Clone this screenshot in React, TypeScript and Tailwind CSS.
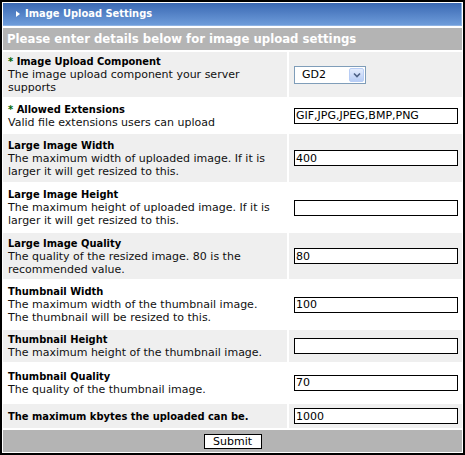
import React from 'react';

interface Setting {
  title: string;
  desc?: string;
  required?: boolean;
  value?: string;
  kind?: 'select' | 'text';
  height: string;
  shaded: boolean;
}

const settings: Setting[] = [
  {
    title: 'Image Upload Component',
    desc: 'The image upload component your server supports',
    required: true,
    kind: 'select',
    height: 'h-[46px]',
    shaded: true,
  },
  {
    title: 'Allowed Extensions',
    desc: 'Valid file extensions users can upload',
    required: true,
    value: 'GIF,JPG,JPEG,BMP,PNG',
    height: 'h-[34px]',
    shaded: false,
  },
  {
    title: 'Large Image Width',
    desc: 'The maximum width of uploaded image. If it is larger it will get resized to this.',
    value: '400',
    height: 'h-[49px]',
    shaded: true,
  },
  {
    title: 'Large Image Height',
    desc: 'The maximum height of uploaded image. If it is larger it will get resized to this.',
    value: '',
    height: 'h-[48px]',
    shaded: false,
  },
  {
    title: 'Large Image Quality',
    desc: 'The quality of the resized image. 80 is the recommended value.',
    value: '80',
    height: 'h-[47px]',
    shaded: true,
  },
  {
    title: 'Thumbnail Width',
    desc: 'The maximum width of the thumbnail image. The thumbnail will be resized to this.',
    value: '100',
    height: 'h-[48px]',
    shaded: false,
  },
  {
    title: 'Thumbnail Height',
    desc: 'The maximum height of the thumbnail image.',
    value: '',
    height: 'h-[32px]',
    shaded: true,
  },
  {
    title: 'Thumbnail Quality',
    desc: 'The quality of the thumbnail image.',
    value: '70',
    height: 'h-[39px]',
    shaded: false,
  },
  {
    title: 'The maximum kbytes the uploaded can be.',
    value: '1000',
    height: 'h-[25px]',
    shaded: true,
  },
];

const SelectBox: React.FC = () => (
  <div className="flex h-[18px] w-[72px] items-center border border-[#7f9db9] bg-white">
    <span className="flex-1 pl-[7px] text-[11px] leading-none text-black">GD2</span>
    <span className="mr-px flex h-[14px] w-[15px] items-center justify-center rounded-[2px] border border-[#b8cdf5] bg-gradient-to-b from-[#e3ecfd] to-[#b8cdf5]">
      <svg width="8" height="6" viewBox="0 0 8 6">
        <path d="M1 1.5 L4 4.5 L7 1.5" fill="none" stroke="#4d6185" strokeWidth="1.6" />
      </svg>
    </span>
  </div>
);

const TextBox: React.FC<{ value: string }> = ({ value }) => (
  <div className="flex h-[16px] w-[164px] items-center border border-black bg-white pl-px text-[11px] leading-none text-black">
    {value}
  </div>
);

export default function App() {
  return (
    <div className="h-[455px] w-[465px] bg-white font-['DejaVu_Sans',Verdana,sans-serif]">
      <div className="flex h-full flex-col gap-[2px] border-2 border-black p-px">
        <div className="flex h-[23px] items-center border-r border-b border-[#8db2e3] bg-gradient-to-b from-[#3b69b3] to-[#6e9cda] pl-[13px]">
          <svg width="4" height="6" viewBox="0 0 4 6" className="mr-[5px]">
            <path d="M0 0 L4 3 L0 6 Z" fill="#ffffff" />
          </svg>
          <span className="font-['DejaVu_Sans_Condensed',Tahoma,sans-serif] text-[11px] font-bold text-white">
            Image Upload Settings
          </span>
        </div>
        <div className="flex h-[23px] items-center bg-[#b4b4b4] pl-[4px]">
          <span className="font-['DejaVu_Sans_Condensed',Tahoma,sans-serif] text-[13px] font-bold text-white">
            Please enter details below for image upload settings
          </span>
        </div>
        {settings.map((s) => (
          <div key={s.title} className={`flex gap-[2px] ${s.height}`}>
            <div
              className={`flex w-[284px] flex-col justify-center pl-[5px] pr-2 text-[11px] leading-[13px] text-black ${
                s.shaded ? 'bg-[#efefef]' : 'bg-white'
              }`}
            >
              <div className="font-['DejaVu_Sans_Condensed',Tahoma,sans-serif] font-bold">
                {s.required && <span className="text-[#006600]">* </span>}
                {s.title}
              </div>
              {s.desc && <div className="text-[#111]">{s.desc}</div>}
            </div>
            <div
              className={`flex flex-1 items-center pl-[5px] ${
                s.shaded ? 'bg-[#efefef]' : 'bg-white'
              }`}
            >
              {s.kind === 'select' ? <SelectBox /> : <TextBox value={s.value ?? ''} />}
            </div>
          </div>
        ))}
        <div className="flex h-[22px] items-center justify-center bg-[#b4b4b4]">
          <button className="h-[15px] w-[58px] border border-black bg-white text-[11px] leading-none text-black">
            Submit
          </button>
        </div>
      </div>
    </div>
  );
}
